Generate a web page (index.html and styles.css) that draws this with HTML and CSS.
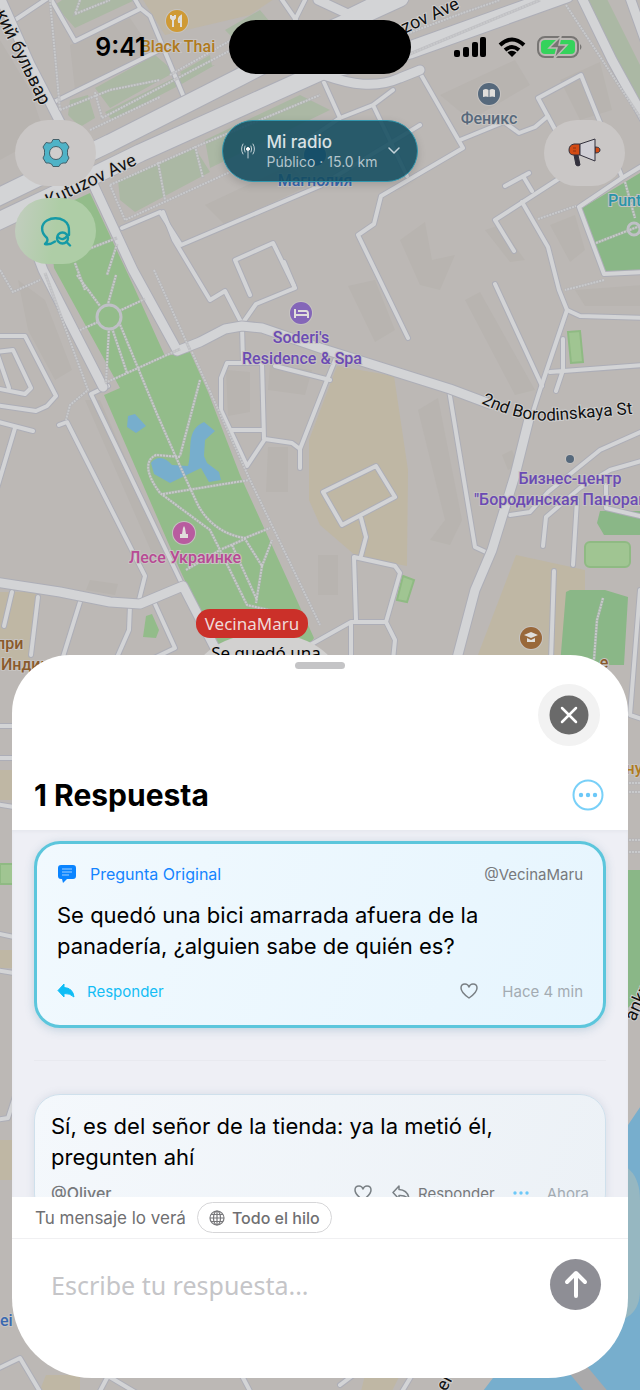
FILE: index.html
```html
<!DOCTYPE html>
<html lang="es">
<head>
<meta charset="utf-8">
<meta name="viewport" content="width=device-width, initial-scale=1">
<title>Mi radio</title>
<link rel="stylesheet" href="styles.css">
</head>
<body>
<div class="screen">
  <svg class="map" viewBox="0 0 640 1390" preserveAspectRatio="xMidYMin slice" role="img" aria-label="Mapa">
    <defs>
      <path id="blvd-label" d="M-5 13 L54 134"/>
      <path id="kutuzov-label" d="M49 207 L163 152"/>
      <path id="kutuzov-label-2" d="M371 49 L500 -10"/>
      <path id="borodin-label" d="M481 403 Q522 424 560 420 Q600 417 660 411"/>
      <g id="avenues">
        <path d="M-10 201 L60 167 L110 143 L240 77 L330 30 L400 -2"/>
        <path d="M-10 225 L60 192 L140 153 L320 72 L410 50 L566 -6"/>
      </g>
      <g id="roads">
        <path d="M-6 -16 L30 64 L62 126"/>
        <path d="M94 186 L133 270 L177 350"/>
        <path d="M22 215 L43 270 L103 387"/>
        <path d="M177 351 L200 342 L225 329 L242 326 L262 328 L320 348 L450 389 L490 404"/>
        <path d="M-5 582 L60 592 L110 602 L140 604 L183 586 L216 650"/>
        <path d="M530 415 L515 475 L492 550 L475 590 L456 662"/>
        <path d="M580 -6 L612 60 L645 120"/>
        <path d="M327 76 C350 84 375 89 400 78 L420 70"/>
        <path d="M628 -8 L645 40"/>
        <path d="M318 0 L348 14 L385 -4"/>
      </g>
      <g id="streets">
        <path d="M54 102 L170 45"/>
        <path d="M12 22 L48 -2 M48 -6 L75 41 L140 9 M132 -6 L140 8 L150 16 L183 95"/>
        <path d="M278 -6 L296 20 M306 -2 L288 34"/>
        <path d="M122 228 L160 212 L181 245 L320 186 L420 125"/>
        <path d="M163 212 L174 240 L210 300 L225 291 L242 324 L256 304 L295 288 L284 262"/>
        <path d="M235 260 L273 243 L294 286 M235 260 L250 295"/>
        <path d="M408 73 L420 73 L463 148 L381 196 L374 224 L358 235 L408 338"/>
        <path d="M373 105 L393 90 M373 105 L407 176 M322 78 L340 118 L300 145 M340 118 L373 105"/>
        <path d="M460 140 L504 122 L519 133 L535 127 L548 116 M558 135 L538 98 L581 75 L622 177"/>
        <path d="M505 186 L529 173 M523 176 L532 191 M495 220 L560 178 M495 220 L514 251"/>
        <path d="M522 202 L548 247 L559 290 L567 310 L540 390 L532 415"/>
        <path d="M567 310 L580 316 L645 318 M495 284 L542 386 M563 339 V370 L556 391 M550 372 L645 365"/>
        <path d="M579 207 L622 178 L645 164 M579 207 L604 274 L645 272"/>
        <path d="M-5 336 L25 336 L56 396 L47 406 L36 411 L-5 405 M-5 352 L13 350 L31 388 L25 394 L-5 388 M-3 353 L9 388"/>
        <path d="M-5 421 L33 431 M15 428 L-5 495"/>
        <path d="M59 425 L67 422 L145 576 L139 600"/>
        <path d="M108 386 L91 394 L183 586"/>
        <path d="M12 592 L4 626 M38 597 L31 655 M80 602 L62 660 M130 605 L129 630 L115 662 M155 604 L175 648 L150 660"/>
        <path d="M242 326 L243 363 M262 363 L227 363 L221 378 V410 L247 466 L265 439 L292 443 L300 449 V468 M262 363 L264 439 M232 430 H262 M300 449 L327 380 L336 358 M275 366 L330 380"/>
        <path d="M449 390 L475 547 L490 554"/>
        <path d="M323 492 L376 466 L395 497 L342 525 Z M361 518 L366 537 L361 556 M354 557 L395 566 L400 573 L386 622 L351 622 L310 645 M354 557 L356 620 M351 622 L351 660 M386 622 L395 640 L393 660"/>
        <path d="M510 515 L530 512 L548 492 L600 450 L645 430 M543 546 L546 517 L580 488 L610 470 L645 460 M577 500 L573 565 M606 485 V508 L640 516"/>
        <path d="M554 571 L551 660 M640 590 L630 715 L645 720"/>
        <path d="M-5 1370 L20 1358 L42 1395 M98 1395 L108 1376 L140 1395 M240 1372 L252 1395"/>
        <path d="M-5 1120 L8 1118 L30 1050 M-5 933 L14 937 M-5 970 L20 974 M340 1385 L360 1370 M400 1395 L415 1370"/>
        <path d="M-5 726 H20 M-5 758 H20 M-5 804 L20 808"/>
      </g>
      <g id="paths">
        <path d="M77 275 L100 306 M116 275 L108 304 M119 311 L145 299 M98 322 L80 330 M109 328 L106 382 M112 328 L127 373 M119 322 L157 414 L175 455 L190 488 L197 503 C205 520 222 535 245 538 L270 528"/>
        <path d="M105 383 L180 349 M200 380 L180 456 M180 457 L156 455 C145 460 145 473 160 493 L210 530 L220 550 L247 605 L290 615 M163 494 L249 480 M222 549 L245 539 L262 566 L256 603 M262 566 L272 540 M232 545 L257 600 M186 570 L220 550"/>
        <path d="M52 263 L117 238 M117 244 L107 275 M75 263 L85 290"/>
        <path d="M192 352 L250 480 L320 625 M154 270 L190 350 M45 273 L88 390 L70 405 L66 420 M0 270 L13 292 L40 280"/>
        <path d="M50 0 L60 110 M80 0 L75 14 L110 0 M60 110 L110 90 L160 80 M95 92 L102 118 L250 40 M90 130 L160 97"/>
        <path d="M110 185 L200 145 L320 95 M110 185 L125 220 L230 172 M158 162 L165 200 M195 146 L203 178 M170 75 L240 35"/>
        <path d="M625 182 L635 218 M596 243 L645 224 M538 219 L576 206 M604 280 L565 290"/>
        <path d="M603 598 L597 620 L594 660"/>
        <path d="M396 38 L460 14 L500 0 M400 58 L540 0 M566 5 L645 125"/>
        <path d="M620 783 H645 M620 792 H645 M620 840 H645 M620 852 H645"/>
      </g>
    </defs>

    <rect class="land" x="-400" width="1440" height="1390"/>
    <g class="block">
      <path d="M0 40 L30 90 L45 135 L0 160 Z M70 45 L130 18 L155 55 L75 90 Z M205 205 L290 165 L310 185 L225 225 Z"/>
      <path d="M440 95 L515 60 L530 85 L470 120 Z M560 80 L600 62 L612 110 L580 120 Z M400 240 L425 222 L432 260 L455 255 L440 290 L420 285 Z"/>
      <path d="M270 365 L312 370 L305 395 L268 390 Z M226 370 L250 372 L250 412 L228 416 Z M268 447 H288 V492 H266 Z"/>
      <path d="M340 398 L375 402 L362 468 L326 460 Z M418 410 L438 398 L462 520 L450 545 L430 540 L445 520 Z"/>
      <path d="M348 286 L375 280 L395 330 L375 342 Z M465 300 L480 292 L535 390 L515 395 Z M502 455 L512 450 L518 465 L508 470 Z"/>
      <path d="M18 280 L45 300 L72 370 L55 380 L28 330 Z M85 400 L100 400 L170 560 L155 560 Z M90 580 L118 584 L115 595 L86 590 Z M318 555 H338 V595 H318 Z"/>
      <path d="M575 290 L645 285 V306 H585 Z M485 230 L500 225 L525 260 L510 262 Z M550 225 L575 215 L585 250 L570 262 Z"/>
    </g>
    <g class="sand">
      <path d="M140 -5 H280 L250 15 L165 35 Z" opacity=".8"/>
      <path d="M337 366 L394 376 L408 470 L407 566 L356 556 L320 525 L309 500 V440 Z"/>
      <path d="M516 555 L585 570 V590 L568 595 L560 660 H476 Z"/>
      <path d="M0 592 H36 L30 660 H0 Z M0 770 H12 V800 H0 Z M0 1140 H12 V1180 H0 Z M46 1375 H80 V1390 H40 Z M0 950 H12 V968 H0 Z M365 1375 H400 L390 1395 H360 Z"/>
    </g>
    <g class="lawn">
      <path d="M55 5 L62 0 H135 L75 28 Z M95 88 L155 55 L175 72 L110 108 Z M105 112 L190 70 L215 65 L180 85 L112 120 Z M70 100 L88 95 L95 118 L80 127 L68 115 Z"/>
      <path d="M118 180 L195 148 L210 172 L135 212 L120 200 Z M205 140 L300 95 L330 110 L210 168 Z M225 30 L260 10 L270 22 L235 40 Z M180 72 L210 55 L212 66 L185 80 Z"/>
      <path d="M585 0 L605 -5 L645 75 V110 Z"/>
    </g>
    <path class="park" d="M48 212 L90 193 L133 285 L165 356 L190 352 L208 392 L240 475 L314 638 L300 660 L215 645 L180 570 L104 395 L120 388 L54 268 Z"/>
    <path class="park" d="M146 616 L152 614 L159 630 L156 638 L143 637 Z"/>
    <path class="park-deep" d="M582 208 L645 170 V270 L605 272 Z M600 511 H645 V535 H604 L597 523 Z M570 590 H605 L628 597 L624 665 H560 L566 592 Z M626 870 H645 V990 L626 1010 Z"/>
    <g class="pitch">
      <path d="M568 332 L580 331 L583 362 L571 363 Z M403 576 L414 580 L407 602 L397 600 Z M0 864 H16 V884 H0 Z"/>
      <rect x="585" y="542" width="45" height="25" rx="5"/>
    </g>
    <g class="water">
      <path d="M128 416 L135 414 L146 426 L136 433 L127 427 Z"/>
      <path d="M151 463 C156 456 165 456 172 465 L188 466 C193 450 185 430 204 422 L215 431 L205 440 L204 456 L207 463 L219 472 L221 480 L209 482 L201 468 L170 483 L154 474 Z"/>
      <path d="M645 1100 L628 1125 L560 1290 L480 1395 H645 Z"/>
    </g>
    <path class="islet" d="M600 1160 C628 1160 640 1175 640 1200 V1290 C640 1312 628 1322 600 1325 Z"/>
    <path class="bridge" d="M570 1360 L605 1402"/>

    <use href="#streets" class="casing street-casing"/>
    <use href="#streets" class="fill street-fill"/>
    <use href="#roads" class="casing road-casing"/>
    <use href="#avenues" class="casing avenue-casing"/>
    <use href="#roads" class="fill road-fill"/>
    <use href="#avenues" class="fill avenue-fill"/>
    <use href="#paths" class="footpath-casing"/>
    <use href="#paths" class="footpath"/>
    <circle class="roundabout" cx="109" cy="317" r="12"/>
    <circle class="roundabout" cx="634" cy="229" r="6"/>

    <g class="street-name">
      <text><textPath href="#blvd-label">кий бульвар</textPath></text>
      <text><textPath href="#kutuzov-label">Kutuzov Ave</textPath></text>
      <text><textPath href="#kutuzov-label-2">Kutuzov Ave</textPath></text>
      <text class="narrow-name"><textPath href="#borodin-label">2nd Borodinskaya St</textPath></text>
      <text transform="translate(635 1022) rotate(-66)">ankn</text>
      <text transform="translate(446 1392) rotate(-62)">el</text>
    </g>
    <g class="place">
      <g class="gold">
        <circle cx="177" cy="21" r="11"/>
        <path class="glyph-line" d="M173 16 V27 M171 15 V18 Q173 21 175 18 V15 M181 27 V16 Q178 18 179 22 H181"/>
        <text x="178" y="52">Black Thai</text>
        <text x="634" y="774">ну</text>
      </g>
      <g class="slate">
        <circle cx="489" cy="94" r="11"/>
        <path class="glyph-fill" d="M483 90 Q486 88 488.500 90 V97 Q486 96 483 97 Z M495 90 Q492 88 489.500 90 V97 Q492 96 495 97 Z"/>
        <text x="489" y="124">Феникс</text>
        <circle cx="570" cy="459" r="4"/>
      </g>
      <g class="violet">
        <circle cx="301" cy="313" r="11"/>
        <path class="glyph-line" d="M295 309 V318 M295 315 H308 V318 M298 311 H306 Q308 311 308 314"/>
        <text x="301" y="343">Soderi's</text>
        <text x="302" y="364">Residence &amp; Spa</text>
        <text x="570" y="484">Бизнес-центр</text>
        <text class="from-start" x="474" y="505">"Бородинская Панорама"</text>
      </g>
      <g class="pink">
        <circle cx="184" cy="533" r="11"/>
        <path class="glyph-fill" d="M183 528 L184 526 L185 528 L186 534 H188 V538 H180 V534 H182 Z"/>
        <text x="185" y="563">Лесе Украинке</text>
      </g>
      <g class="brown">
        <circle cx="531" cy="638" r="11"/>
        <path class="glyph-fill" d="M524 635 L531 632 L538 635 L531 638 Z M527 638 L531 640 L535 638 V642 H527 Z"/>
        <text class="from-start" x="-4" y="649">при</text>
        <text class="from-start" x="1" y="670">Индии</text>
        <text x="604" y="668">е</text>
      </g>
      <g class="blue">
        <circle cx="315" cy="155" r="11"/>
        <text x="315" y="186">Магнолия</text>
        <text class="from-start" x="0" y="1326">ei</text>
      </g>
      <text class="teal from-start" x="608" y="206">Punto</text>
    </g>
    <g class="pin">
      <ellipse cx="266" cy="680" rx="73" ry="47"/>
      <text x="266" y="659">Se quedó una</text>
      <rect x="196" y="609" width="112" height="29" rx="14"/>
      <text class="pin-user" x="252" y="630">VecinaMaru</text>
    </g>
  </svg>

  <header class="status">
    <time class="clock">9:41</time>
    <span class="island"></span>
    <span class="indicators">
      <svg width="33" height="22" viewBox="0 0 33 22" aria-hidden="true"><rect x="0" y="14" width="6" height="7" rx="2"/><rect x="9" y="11" width="6" height="10" rx="2"/><rect x="18" y="6" width="6" height="15" rx="2"/><rect x="26" y="1" width="6" height="20" rx="2"/></svg>
      <svg width="28" height="21" viewBox="0 0 28 21" aria-hidden="true"><g fill="none" stroke="#000" stroke-width="4"><path d="M2 8 Q14 -3 26 8"/><path d="M7 13 Q14 7 21 13"/></g><path d="M14 20 L9.500 15.500 Q14 12 18.500 15.500 Z"/></svg>
      <svg width="46" height="24" viewBox="0 0 46 24" aria-hidden="true"><rect x="1" y="2" width="40" height="20" rx="7" fill="none" stroke="#777573" stroke-width="2"/><rect x="4" y="5" width="34" height="14" rx="4" fill="#35d35c"/><path d="M43 9 Q46 12 43 15 Z" fill="#777573"/><path d="M24 1 L12 13 H20 L17 24 L30 10 H22 Z" fill="#777573" stroke="#bdb9b6" stroke-width="1.500"/></svg>
    </span>
  </header>

  <nav class="controls" aria-label="Controles del mapa">
    <div class="stack">
      <button class="round" aria-label="Ajustes">
        <svg width="30" height="30" viewBox="0 0 30 30"><path fill="#4fb3c7" stroke="#44616b" stroke-linejoin="round" d="M12 1.500 H18 L19.500 4.500 Q21 5 22 5 L25 4.500 L28 9 L26.500 12 Q26.500 15 26.500 17 L28 20 L25 25 H22 Q20.500 25.500 19.500 26 L18 28.500 H12 L10.500 26 Q9 25.500 8 25 H5 L2 20 L3.500 17 Q3.500 15 3.500 12 L2 9 L5 4.500 L8 5 Q9.500 5 10.500 4.500 Z"/><circle cx="15" cy="15" r="6.500" fill="#d0cecd" stroke="#44616b"/></svg>
      </button>
      <button class="round green" aria-label="Buscar conversaciones">
        <svg width="32" height="32" viewBox="0 0 32 32" fill="none" stroke="#159aa6" stroke-width="2.400" stroke-linecap="round" stroke-linejoin="round"><path d="M15 26.500 Q10 30 5 29 Q8.500 26 7 23 C0 17 1 9 7 5.500 C12 2.500 19 2.500 24 5.500 Q29.500 9 29 17 V20"/><circle cx="22.500" cy="23" r="5.500"/><path d="M26.500 27 L30 30.500 M18 22 Q23 27 28 20"/></svg>
      </button>
    </div>
    <button class="radius">
      <svg width="16" height="18" viewBox="0 0 16 18" fill="none" stroke="#c4d2d8" stroke-linecap="round"><circle cx="8" cy="7" r="1.500" fill="#fff" stroke="#fff"/><path d="M8 8 V16 M5 4 Q3.500 7 5 10 M11 4 Q12.500 7 11 10 M3 2 Q0 7 3 12 M13 2 Q16 7 13 12"/></svg>
      <span class="radius-text"><b>Mi radio</b><small>Público · 15.0 km</small></span>
      <svg width="12" height="8" viewBox="0 0 12 8" fill="none" stroke="#c4d2d8" stroke-width="1.500" stroke-linecap="round" stroke-linejoin="round"><path d="M1 1 L6 6 L11 1"/></svg>
    </button>
    <button class="round" aria-label="Anuncios">
      <svg width="34" height="32" viewBox="0 0 34 32" stroke="#33313d" stroke-linejoin="round"><path fill="#33313d" d="M7 18 H11 L13 28 Q11 30 9 28 Z"/><path fill="#d34b14" d="M13 7 H7 Q2 8 2 13 Q2 18 7 18 H13 Z M28 10 Q33 10 33 13 Q33 16 28 16 Z"/><path fill="#d0cfd6" d="M13 7 L28 2 V24 L13 18 Z"/><path stroke="#8c3413" d="M6 11 H9 M6 14 H9"/></svg>
    </button>
  </nav>

  <main class="sheet">
    <span class="grabber"></span>
    <div class="close-row">
      <button class="close" aria-label="Cerrar"><svg width="40" height="40" viewBox="0 0 40 40"><circle cx="20" cy="20" r="19.500" fill="#6a6a6a"/><path d="M13 13 L27 27 M27 13 L13 27" stroke="#fff" stroke-width="2.500" stroke-linecap="round"/></svg></button>
    </div>
    <div class="title-row">
      <h1>1 Respuesta</h1>
      <button class="more" aria-label="Más opciones"><svg width="32" height="32" viewBox="0 0 32 32"><circle cx="16" cy="16" r="14.500" fill="none" stroke="#79d0f8" stroke-width="2"/><g fill="#6bc8f8"><circle cx="9" cy="16" r="2.200"/><circle cx="16" cy="16" r="2.200"/><circle cx="23" cy="16" r="2.200"/></g></svg></button>
    </div>

    <section class="thread">
      <article class="card question">
        <div class="row">
          <svg width="20" height="20" viewBox="0 0 20 20"><path fill="#0a84ff" d="M4 1 H16 Q19 1 19 4 V12 Q19 15 16 15 H10 L6 19 L5 15 H4 Q1 15 1 12 V4 Q1 1 4 1 Z"/><path stroke="#9fd0ff" stroke-width="1.200" d="M5 5 H15 M5 8 H15 M5 11 H12"/></svg>
          <span class="tag">Pregunta Original</span>
          <span class="author push">@VecinaMaru</span>
        </div>
        <p>Se quedó una bici amarrada afuera de la panadería, ¿alguien sabe de quién es?</p>
        <div class="row">
          <button class="reply"><svg width="18" height="16" viewBox="0 0 18 16"><path fill="#0fbdf5" d="M7 1 V4.500 Q16 5 17 14 Q13 10 7 10.500 V14 L1 7.500 Z" stroke="#0fbdf5" stroke-linejoin="round"/></svg>Responder</button>
          <button class="icon push" aria-label="Me gusta"><svg width="18" height="16" viewBox="0 0 18 16"><path fill="none" stroke="#7a8085" stroke-width="1.500" stroke-linejoin="round" d="M9 15 Q1 9.500 1 5 Q1 1 5 1 Q8 1 9 4 Q10 1 13 1 Q17 1 17 5 Q17 9.500 9 15 Z"/></svg></button>
          <span class="when">Hace 4 min</span>
        </div>
      </article>
      <hr>
      <article class="card answer">
        <p>Sí, es del señor de la tienda: ya la metió él, pregunten ahí</p>
        <div class="row">
          <span class="author">@Oliver</span>
          <button class="icon push" aria-label="Me gusta"><svg width="18" height="16" viewBox="0 0 18 16"><path fill="none" stroke="#7a8085" stroke-width="1.500" stroke-linejoin="round" d="M9 15 Q1 9.500 1 5 Q1 1 5 1 Q8 1 9 4 Q10 1 13 1 Q17 1 17 5 Q17 9.500 9 15 Z"/></svg></button>
          <button class="reply muted"><svg width="18" height="16" viewBox="0 0 18 16"><path fill="none" stroke="#7a8085" stroke-width="1.500" stroke-linejoin="round" d="M7 1 V4.500 Q16 5 17 14 Q13 10 7 10.500 V14 L1 7.500 Z"/></svg>Responder</button>
          <button class="icon" aria-label="Más"><svg width="16" height="4" viewBox="0 0 16 4" fill="#6bc8f8"><circle cx="2" cy="2" r="1.700"/><circle cx="8" cy="2" r="1.700"/><circle cx="14" cy="2" r="1.700"/></svg></button>
          <span class="when">Ahora</span>
        </div>
      </article>
    </section>

    <footer>
      <div class="audience">
        <span class="audience-label">Tu mensaje lo verá</span>
        <button class="scope"><svg width="16" height="16" viewBox="0 0 16 16" fill="none" stroke="#77777a" stroke-width="1.200"><circle cx="8" cy="8" r="7"/><ellipse cx="8" cy="8" rx="3.500" ry="7"/><path d="M8 1 V15 M1 8 H15 M2 4.500 H14 M2 11.500 H14"/></svg>Todo el hilo</button>
      </div>
      <form class="composer">
        <input type="text" placeholder="Escribe tu respuesta..." aria-label="Escribe tu respuesta">
        <button type="button" class="send" aria-label="Enviar"><svg width="50" height="50" viewBox="0 0 50 50"><path d="M25 36 V14 M16 22 L25 13 L34 22" fill="none" stroke="#fff" stroke-width="4" stroke-linecap="round" stroke-linejoin="round"/></svg></button>
      </form>
    </footer>
  </main>
</div>
</body>
</html>
```
FILE: styles.css
```css
* { box-sizing: border-box; }
body { margin: 0; font-family: Inter, "Liberation Sans", sans-serif; color: #000; }
button { border: 0; padding: 0; background: none; font: inherit; color: inherit; display: flex; align-items: center; justify-content: center; }
svg { display: block; flex: none; }

.screen { position: relative; height: 100vh; display: flex; flex-direction: column; overflow: hidden; }

/* Map */
.map { position: absolute; inset: 0; width: 100%; height: 100%; z-index: -1; }
.land { fill: #bcb8b5; }
.block { fill: #b8b4b0; }
.sand { fill: #bfb7a4; }
.lawn { fill: #abb8a4; }
.park { fill: #93bc8a; }
.park-deep { fill: #8ab787; }
.pitch { fill: #a0c592; stroke: #8fba83; stroke-width: 2; }
.water { fill: #77aecd; }
.islet { fill: #96b7c1; }
.bridge { fill: none; stroke: #aaa9aa; stroke-width: 18; }
.casing, .fill { fill: none; stroke-linecap: round; stroke-linejoin: round; }
.casing { stroke: #adaeb7; }
.fill { stroke: #d3d4d6; }
.street-casing { stroke-width: 6; }
.street-fill { stroke-width: 4; }
.road-casing { stroke-width: 11; }
.road-fill { stroke-width: 9; }
.avenue-casing { stroke-width: 19; }
.avenue-fill { stroke-width: 17; }
.footpath-casing { fill: none; stroke: #b2b2b7; stroke-width: 3; opacity: .6; }
.footpath { fill: none; stroke: #c8c9cb; stroke-width: 2; stroke-dasharray: 2 1; }
.roundabout { fill: none; stroke: #bfc0c6; stroke-width: 3; }
.street-name { font: 18px Roboto, sans-serif; fill: #111; stroke: #cfcfcf; stroke-width: 2; paint-order: stroke; }
.narrow-name { font-size: 17px; }
.place { font: 500 16px Roboto, sans-serif; text-anchor: middle; stroke: #c6c3c1; stroke-width: 2; paint-order: stroke; }
.from-start { text-anchor: start; }
.glyph-line { fill: none; stroke: #e0dedb; stroke-width: 2; }
.glyph-fill { fill: #e0dedb; stroke: none; }
.gold { fill: #b07a1c; }
.gold circle { fill: #cf9a35; }
.slate { fill: #56697c; }
.violet { fill: #6b4bb3; }
.violet circle { fill: #8466b8; }
.pink { fill: #b84a94; }
.pink circle { fill: #b85c9f; }
.brown { fill: #8a5a2c; }
.brown circle { fill: #99683a; }
.blue { fill: #3a69b0; }
.teal { fill: #2994a8; }
.pin { font: 17px "Noto Sans", sans-serif; text-anchor: middle; }
.pin ellipse { fill: #d2d1d0; }
.pin rect { fill: #cb3029; }
.pin .pin-user { fill: #efd9d8; }

/* Status bar */
.status { display: grid; grid-template-columns: 1fr auto 1fr; align-items: center; padding-top: 20px; }
.clock { justify-self: center; padding-left: 12px; font-size: 25px; font-weight: 600; }
.island { width: 182px; height: 54px; border-radius: 27px; background: #000; }
.indicators { justify-self: center; display: flex; align-items: center; gap: 11px; padding-right: 14px; }

/* Floating controls */
.controls { display: flex; justify-content: space-between; align-items: flex-start; padding: 46px 15px 0; }
.stack { display: grid; gap: 12px; }
.round { width: 81px; height: 66px; border-radius: 33px; background: #cac7c6; }
.round.green { background: linear-gradient(100deg, #c3cdc0, #aecda6 50%); }
.radius { height: 62px; padding: 0 17px; gap: 10px; border-radius: 31px; border: 1px solid #3196ad; background: rgba(18, 76, 94, .87); color: #d9e1e4; box-shadow: 0 3px 8px rgba(0, 0, 0, .15); }
.radius-text { display: grid; gap: 2px; text-align: left; }
.radius b { font-size: 17px; line-height: 20px; font-weight: 500; }
.radius small { font-size: 14px; line-height: 16px; color: #b4c5cc; }

/* Sheet */
.sheet { height: 52vh; margin: auto 12px 12px; display: flex; flex-direction: column; overflow: hidden; border-radius: 58px 58px 80px 80px; background: #fff; }
.grabber { align-self: center; width: 50px; height: 7px; margin-top: 7px; border-radius: 4px; background: #c4c4c6; flex: none; }
.close-row { display: flex; justify-content: flex-end; padding: 15px 28px 0; }
.close { width: 62px; height: 62px; border-radius: 50%; background: #f2f2f2; }
.title-row { display: flex; justify-content: space-between; align-items: center; padding: 29px 24px 15px 22px; }
h1 { margin: 0; font-size: 30px; line-height: 40px; font-weight: 700; }
.thread { flex: 1; min-height: 0; overflow-y: auto; scrollbar-width: none; padding: 11px 22px; background: #eeeff5; box-shadow: inset 0 2px 3px #e6e8ee; }
.card { border-radius: 26px; }
.card p { margin: 0; font-size: 22px; line-height: 31px; }
.question { padding: 20px 20px 24px; border: 3px solid #5cc6dc; background: linear-gradient(110deg, #f1f9fe, #e6f5fe); box-shadow: 0 2px 10px rgba(90, 140, 170, .3); }
.question .row + p { margin: 16px 0 19px; }
.row { display: flex; align-items: center; height: 20px; font-size: 15px; color: #77797c; }
.push { margin-left: auto; }
.tag { margin-left: 13px; font-size: 16px; color: #1484ff; }
.reply { gap: 12px; color: #14bdf5; }
.reply.muted { margin: 0 18px 0 20px; gap: 8px; color: #77797c; }
.when { margin-left: 24px; color: #a3abb2; }
hr { height: 1px; margin: 32px 0 33px; border: 0; background: #e8e9ef; }
.answer { padding: 16px; border: 1px solid #cfe0ec; background: linear-gradient(110deg, #f4f8fc, #ecf1f6); box-shadow: 0 0 8px rgba(90, 110, 140, .15); }
.card.answer p { margin-bottom: 10px; }
.answer .author { font-size: 16px; font-weight: 500; }
.answer .when { margin-left: 18px; }
.audience { display: flex; align-items: center; gap: 11px; height: 42px; padding: 0 23px; border-bottom: 1px solid #f0f0f2; font-size: 16px; color: #6f6f72; }
.audience-label { font-size: 17px; }
.scope { gap: 7px; height: 31px; padding: 0 11px; border: 1px solid #d6d6d8; border-radius: 16px; font-weight: 500; }
.composer { display: flex; align-items: center; padding: 20px 27px 68px 39px; }
.composer input { flex: 1; min-width: 0; padding: 0; border: 0; outline: 0; background: none; font: 25px "Noto Sans", sans-serif; }
.composer input::placeholder { color: #c5c5c8; opacity: 1; }
.send { width: 51px; height: 51px; border-radius: 50%; background: #8e8e95; }
```
